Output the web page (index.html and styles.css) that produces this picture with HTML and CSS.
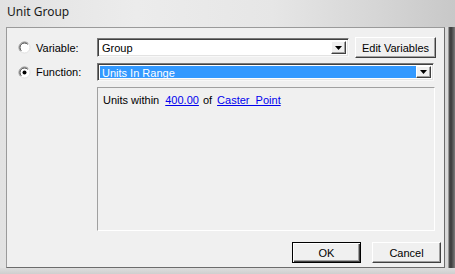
FILE: index.html
```html
<!DOCTYPE html>
<html>
<head>
<meta charset="utf-8">
<link rel="stylesheet" href="styles.css">
</head>
<body>
<div class="window">
  <div class="titlebar"><span class="title">Unit Group</span></div>
  <div class="frame-row">
    <div class="client">
      <div class="row row1">
        <label class="opt">
          <svg class="radio" width="13" height="13" viewBox="0 0 13 13">
            <circle cx="6.5" cy="6.5" r="5.5" fill="#fff"/>
            <path d="M2.6 10.4 A5.5 5.5 0 0 1 10.4 2.6" fill="none" stroke="#8a8a8a" stroke-width="1"/>
            <path d="M10.4 2.6 A5.5 5.5 0 0 1 2.6 10.4" fill="none" stroke="#e0e0e0" stroke-width="1"/>
            <path d="M3.3 9.7 A4.5 4.5 0 0 1 9.7 3.3" fill="none" stroke="#404040" stroke-width="1"/>
          </svg>
          <span>Variable:</span>
        </label>
        <div class="combo combo-var">
          <span class="combo-text">Group</span>
          <span class="dd"><svg width="7" height="4" viewBox="0 0 7 4"><path d="M0 0H7L3.5 4Z" fill="#000"/></svg></span>
        </div>
        <button class="btn btn-edit">Edit Variables</button>
      </div>
      <div class="row row2">
        <label class="opt">
          <svg class="radio" width="13" height="13" viewBox="0 0 13 13">
            <circle cx="6.5" cy="6.5" r="5.5" fill="#fff"/>
            <path d="M2.6 10.4 A5.5 5.5 0 0 1 10.4 2.6" fill="none" stroke="#8a8a8a" stroke-width="1"/>
            <path d="M10.4 2.6 A5.5 5.5 0 0 1 2.6 10.4" fill="none" stroke="#e0e0e0" stroke-width="1"/>
            <path d="M3.3 9.7 A4.5 4.5 0 0 1 9.7 3.3" fill="none" stroke="#404040" stroke-width="1"/>
            <circle cx="6.5" cy="6.5" r="2" fill="#000"/>
          </svg>
          <span>Function:</span>
        </label>
        <div class="combo combo-fn">
          <span class="combo-text sel">Units In Range</span>
          <span class="dd"><svg width="7" height="4" viewBox="0 0 7 4"><path d="M0 0H7L3.5 4Z" fill="#000"/></svg></span>
        </div>
      </div>
      <div class="row row3">
        <div class="panel">
          <span>Units within</span><a class="lnk lnk-num">400.00</a><span class="of">of</span><a class="lnk lnk-pt">Caster_Point</a>
        </div>
      </div>
      <div class="row buttons">
        <button class="btn btn-ok">OK</button>
        <button class="btn btn-cancel">Cancel</button>
      </div>
    </div>
    <div class="rframe"></div>
  </div>
  <div class="bframe"></div>
</div>
</body>
</html>
```
FILE: styles.css
```css
html, body {
  margin: 0;
  padding: 0;
  width: 455px;
  height: 274px;
  overflow: hidden;
  background: #dcdcdc;
}
.window {
  width: 455px;
  height: 274px;
  display: flex;
  flex-direction: column;
  background: linear-gradient(90deg, #e2e2e2 0%, #ececec 30%, #e6e6e6 60%, #d4d4d4 85%, #c8c8c8 100%);
  font-family: "Liberation Sans", Arial, sans-serif;
  font-size: 11px;
  color: #000;
}
.titlebar {
  height: 27px;
  display: flex;
  align-items: flex-start;
  padding-left: 7px;
  box-sizing: border-box;
}
.title {
  font-family: "Noto Sans", "Liberation Sans", sans-serif;
  font-size: 12px;
  line-height: 14px;
  padding-top: 5px;
  color: #1a1a1a;
}
.frame-row {
  display: flex;
  height: 241px;
  padding-left: 6px;
}
.client {
  width: 439px;
  height: 241px;
  box-sizing: border-box;
  background: #f0f0f0;
  border-top: 1px solid #9a9a9a;
  border-left: 1px solid #9a9a9a;
  border-right: 1px solid #6c6c6c;
  border-bottom: 1px solid #6c6c6c;
  display: flex;
  flex-direction: column;
  padding-top: 9px;
}
.rframe {
  width: 10px;
  background: linear-gradient(90deg, #d8d8d8 0, #d8d8d8 3px, #555 4px, #3a3a3a 6px, #7a7a7a 10px);
}
.bframe {
  flex: 1;
  background: linear-gradient(180deg, #dedede, #cfcfcf);
}
.row {
  display: flex;
  align-items: center;
}
.opt {
  width: 90px;
  box-sizing: border-box;
  padding-left: 11px;
  display: flex;
  align-items: center;
  gap: 5px;
}
.radio { display: block; flex: none; }
.row1 { height: 21px; }
.combo {
  box-sizing: border-box;
  height: 19px;
  background: #fff;
  border-top: 1px solid #7a7a7a;
  border-left: 1px solid #7a7a7a;
  border-right: 1px solid #f8f8f8;
  border-bottom: 1px solid #f8f8f8;
  box-shadow: inset 1px 1px 0 #404040, inset -1px -1px 0 #e3e3e3;
  display: flex;
  align-items: stretch;
  padding: 2px;
}
.combo-var { width: 252px; }
.combo-text {
  flex: 1;
  line-height: 15px;
  padding-left: 2px;
}
.combo-text.sel {
  background: #3399ff;
  color: #fff;
}
.dd {
  width: 15px;
  box-sizing: border-box;
  background: #f0f0f0;
  border-top: 1px solid #fff;
  border-left: 1px solid #fff;
  border-right: 1px solid #404040;
  border-bottom: 1px solid #404040;
  box-shadow: inset -1px -1px 0 #a0a0a0;
  display: flex;
  align-items: center;
  justify-content: center;
}
.btn {
  font-family: "Liberation Sans", Arial, sans-serif;
  font-size: 11px;
  color: #000;
  background: #f0f0f0;
  box-sizing: border-box;
  border-top: 1px solid #fff;
  border-left: 1px solid #fff;
  border-right: 1px solid #404040;
  border-bottom: 1px solid #404040;
  box-shadow: inset -1px -1px 0 #a0a0a0;
  padding: 0;
  margin: 0;
}
.btn-edit {
  width: 81px;
  height: 21px;
  margin-left: 6px;
}
.row2 { margin-top: 5px; height: 18px; }
.combo-fn { width: 337px; height: 18px; }
.combo-fn .combo-text { line-height: 14px; }
.row3 { margin-top: 6px; padding-left: 90px; }
.panel {
  box-sizing: border-box;
  width: 338px;
  height: 144px;
  border-top: 1px solid #a0a0a0;
  border-left: 1px solid #a0a0a0;
  border-right: 1px solid #fff;
  border-bottom: 1px solid #fff;
  padding: 5px 0 0 5px;
  line-height: 14px;
}
.lnk {
  color: #0000ee;
  text-decoration: underline;
}
.lnk-num { margin-left: 6px; }
.of { margin-left: 4px; }
.lnk-pt { margin-left: 5px; }
.buttons {
  margin-top: 11px;
  justify-content: flex-end;
  gap: 11px;
  padding-right: 3px;
}
.btn-ok, .btn-cancel {
  width: 69px;
  height: 21px;
}
.btn-ok {
  border: 1px solid #000;
  box-shadow: inset 1px 1px 0 #fff, inset -1px -1px 0 #404040, inset -2px -2px 0 #a0a0a0;
}
```
